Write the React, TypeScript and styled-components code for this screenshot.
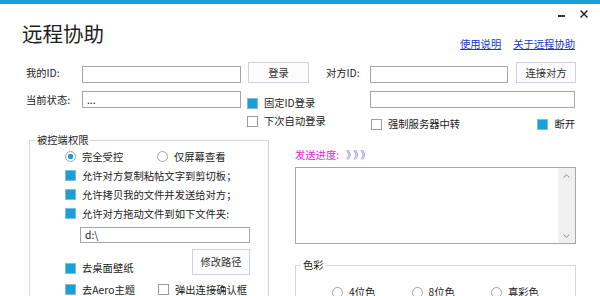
import React from "react";
import styled, { createGlobalStyle } from "styled-components";

const BLUE = "#18a0da";

const GlobalStyle = createGlobalStyle`
  html, body {
    margin: 0;
    padding: 0;
    background: #fff;
  }
  body {
    font-family: "Noto Sans CJK SC", "Noto Sans", sans-serif;
    font-size: 10.3px;
    color: #222;
  }
  * {
    box-sizing: border-box;
  }
`;

const Window = styled.div`
  width: 600px;
  height: 296px;
  overflow: hidden;
  background: #fff;
`;

const TopStrip = styled.div`
  height: 4px;
  background: ${BLUE};
`;

const Header = styled.header`
  display: flex;
  justify-content: space-between;
  height: 58px;
  padding: 0 12px 0 22px;
`;

const Title = styled.h1`
  margin: 19px 0 0;
  font-size: 20.5px;
  line-height: 21px;
  font-weight: normal;
  color: #1e1e1e;
`;

const HeaderRight = styled.div`
  display: flex;
  flex-direction: column;
  align-items: flex-end;
`;

const Controls = styled.div`
  display: flex;
  align-items: center;
  gap: 15px;
  margin-top: 6px;
  height: 8px;
`;

const Minus = styled.span`
  display: block;
  width: 7px;
  height: 2px;
  margin-top: 4px;
  background: #333;
`;

const Links = styled.nav`
  display: flex;
  gap: 12px;
  margin: 19px 13px 0 0;
  line-height: 14px;
`;

const Link = styled.a`
  color: #1638d2;
  text-decoration: underline;
  cursor: pointer;
`;

const FormGrid = styled.div`
  display: grid;
  grid-template-columns: 56px 159px 85px 44px 138px 68px;
  grid-template-rows: 21px 17px 14px;
  row-gap: 8px;
  padding-left: 26px;
`;

const Label = styled.span`
  align-self: center;
  line-height: 14px;
  white-space: nowrap;
`;

const Input = styled.div<{ $span?: number }>`
  grid-column: span ${(p) => p.$span ?? 1};
  height: 17px;
  border: 1px solid #a6a6a6;
  background: #fff;
  padding: 0 4px;
  line-height: 15px;
  align-self: end;
`;

const Button = styled.button<{ $w: number; $h: number; $ml?: number }>`
  width: ${(p) => p.$w}px;
  height: ${(p) => p.$h}px;
  margin-left: ${(p) => p.$ml ?? 0}px;
  padding: 0;
  border: 1px solid #cfcfe6;
  background: #fcfcfc;
  font: inherit;
  color: #333;
  line-height: 14px;
`;

const CheckItem = styled.label<{ $mt?: number; $ml?: number; $w?: number }>`
  display: flex;
  align-items: center;
  gap: 6px;
  height: 14px;
  line-height: 14px;
  margin-top: ${(p) => p.$mt ?? 0}px;
  margin-left: ${(p) => p.$ml ?? 0}px;
  width: ${(p) => (p.$w ? `${p.$w}px` : "auto")};
  white-space: nowrap;
`;

const Box = styled.span<{ $on?: boolean }>`
  flex: none;
  width: 11px;
  height: 11px;
  border: 1px solid ${(p) => (p.$on ? "#8fb7cc" : "#9c9c9c")};
  background: ${(p) => (p.$on ? BLUE : "#fff")};
`;

const Radio = styled.span<{ $on?: boolean }>`
  flex: none;
  width: 11px;
  height: 11px;
  border-radius: 50%;
  border: 1px solid #a2a2a2;
  background: ${(p) =>
    p.$on ? `radial-gradient(circle, ${BLUE} 0 2.6px, #fff 3px)` : "#fff"};
`;

const RightEnd = styled.div`
  display: flex;
  justify-content: flex-end;
  margin-right: 1px;
`;

const Main = styled.div`
  display: grid;
  grid-template-columns: 240px 281px;
  column-gap: 26px;
  padding-left: 29px;
  margin-top: 3px;
`;

const Group = styled.fieldset<{ $pl: number; $pt: number }>`
  margin: 0;
  min-width: 0;
  padding: ${(p) => p.$pt}px 18px 0 ${(p) => p.$pl}px;
  border: 1px solid #d7d7d7;
  height: 220px;
`;

const Legend = styled.legend<{ $ml: number }>`
  margin-left: ${(p) => p.$ml}px;
  padding: 0 2px;
  line-height: 14px;
`;

const Row = styled.div<{ $h?: number; $mt?: number }>`
  display: flex;
  align-items: center;
  height: ${(p) => p.$h ?? 19}px;
  margin-top: ${(p) => p.$mt ?? 0}px;
`;

const PathInput = styled.div`
  width: 170px;
  height: 16px;
  margin: 4px 0 0 15px;
  border: 1px solid #a6a6a6;
  padding: 0 4px;
  line-height: 14px;
`;

const BottomRow = styled.div`
  display: flex;
  align-items: flex-end;
  justify-content: space-between;
  margin-top: 6px;
`;

const RightCol = styled.div`
  display: flex;
  flex-direction: column;
  padding-top: 15px;
`;

const Progress = styled.div`
  line-height: 14px;
  color: #e224e0;
  white-space: nowrap;
`;

const Arrows = styled.span`
  margin-left: 7px;
  color: #6466ee;
  letter-spacing: 2px;
`;

const TextBox = styled.div`
  display: flex;
  height: 77px;
  margin-top: 5px;
  border: 1px solid #a8a8a8;
`;

const TextArea = styled.div`
  flex: 1;
`;

const Scrollbar = styled.div`
  width: 17px;
  background: #f0f0f0;
  display: flex;
  flex-direction: column;
  justify-content: space-between;
  align-items: center;
  padding: 6px 0 5px;
`;

const ColorGroup = styled(Group)`
  margin-top: 14px;
  padding-right: 0;
`;

const RadioGrid = styled.div`
  display: grid;
  grid-template-columns: repeat(3, 79.5px);
  height: 14px;
`;

const Chevron = ({ up }: { up?: boolean }) => (
  <svg width="7" height="4" viewBox="0 0 7 4">
    <path
      d={up ? "M0.5 3.5 L3.5 0.8 L6.5 3.5" : "M0.5 0.5 L3.5 3.2 L6.5 0.5"}
      fill="none"
      stroke="#8a8a8a"
      strokeWidth="1"
    />
  </svg>
);

const CloseIcon = () => (
  <svg width="8" height="8" viewBox="0 0 8 8">
    <path d="M0.6 0.6 L7.4 7.4 M7.4 0.6 L0.6 7.4" stroke="#222" strokeWidth="1.4" />
  </svg>
);

const Check = ({ on, text, ...rest }: { on?: boolean; text: string; $mt?: number; $ml?: number; $w?: number }) => (
  <CheckItem {...rest}>
    <Box $on={on} />
    {text}
  </CheckItem>
);

const RadioItem = ({ on, text, $w }: { on?: boolean; text: string; $w?: number }) => (
  <CheckItem $w={$w}>
    <Radio $on={on} />
    {text}
  </CheckItem>
);

export default function App() {
  return (
    <Window>
      <GlobalStyle />
      <TopStrip />
      <Header>
        <Title>远程协助</Title>
        <HeaderRight>
          <Controls>
            <Minus />
            <CloseIcon />
          </Controls>
          <Links>
            <Link>使用说明</Link>
            <Link>关于远程协助</Link>
          </Links>
        </HeaderRight>
      </Header>

      <FormGrid>
        <Label>我的ID:</Label>
        <Input />
        <Button $w={61} $h={21} $ml={7}>登录</Button>
        <Label>对方ID:</Label>
        <Input />
        <Button $w={60} $h={21} $ml={8}>连接对方</Button>

        <Label>当前状态:</Label>
        <Input>...</Input>
        <Check on text="固定ID登录" $mt={5} $ml={6} />
        <span />
        <Input $span={2} style={{ marginRight: 1 }} />

        <span />
        <span />
        <Check text="下次自动登录" $mt={-2} $ml={6} />
        <span />
        <Check text="强制服务器中转" $mt={1} $ml={1} />
        <RightEnd>
          <Check on text="断开" $mt={1} />
        </RightEnd>
      </FormGrid>

      <Main>
        <Group $pl={35} $pt={0}>
          <Legend $ml={-30}>被控端权限</Legend>
          <Row>
            <RadioItem on text="完全受控" $w={92} />
            <RadioItem text="仅屏幕查看" />
          </Row>
          <Row>
            <Check on text="允许对方复制粘帖文字到剪切板；" />
          </Row>
          <Row>
            <Check on text="允许拷贝我的文件并发送给对方；" />
          </Row>
          <Row>
            <Check on text="允许对方拖动文件到如下文件夹:" />
          </Row>
          <PathInput>d:\</PathInput>
          <BottomRow>
            <Check on text="去桌面壁纸" />
            <Button $w={58} $h={26}>修改路径</Button>
          </BottomRow>
          <Row $mt={5}>
            <Check on text="去Aero主题" $w={93} />
            <Check text="弹出连接确认框" />
          </Row>
        </Group>

        <RightCol>
          <Progress>
            发送进度:<Arrows>》》》</Arrows>
          </Progress>
          <TextBox>
            <TextArea />
            <Scrollbar>
              <Chevron up />
              <Chevron />
            </Scrollbar>
          </TextBox>
          <ColorGroup $pl={36} $pt={13}>
            <Legend $ml={-31}>色彩</Legend>
            <RadioGrid>
              <RadioItem text="4位色" />
              <RadioItem text="8位色" />
              <RadioItem text="真彩色" />
            </RadioGrid>
          </ColorGroup>
        </RightCol>
      </Main>
    </Window>
  );
}
